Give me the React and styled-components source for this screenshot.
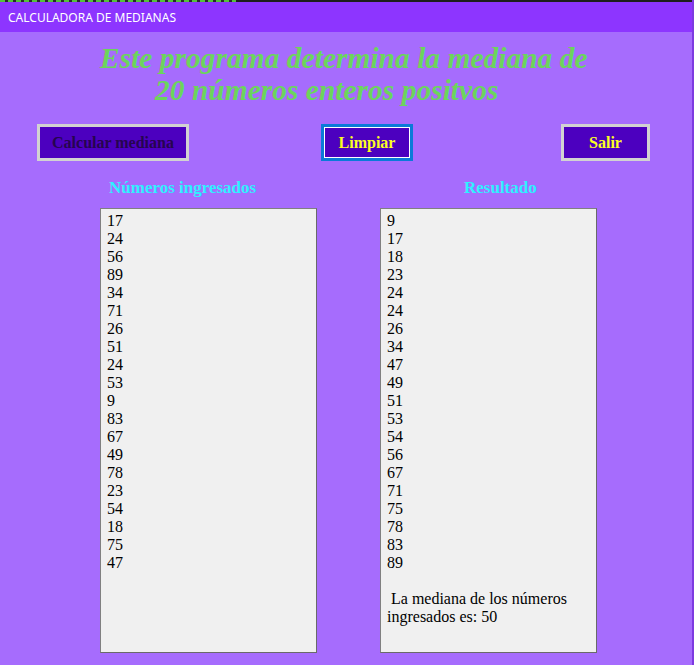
import React from "react";
import styled, { createGlobalStyle } from "styled-components";

const GlobalStyle = createGlobalStyle`
  html, body {
    margin: 0;
    padding: 0;
    background: #a66cfd;
  }
`;

const ingresados = [17, 24, 56, 89, 34, 71, 26, 51, 24, 53, 9, 83, 67, 49, 78, 23, 54, 18, 75, 47];
const ordenados = [...ingresados].sort((a, b) => a - b);

const Window = styled.div`
  width: 694px;
  height: 665px;
  display: flex;
  flex-direction: column;
  background: #a66cfd;
  border-right: 2px solid #7d3ae0;
  box-sizing: border-box;
  overflow: hidden;
`;

const TopStrip = styled.div`
  height: 2px;
  background: repeating-linear-gradient(90deg, #55c23a 0 5px, #2a2a2a 5px 8px);
  background-size: 236px 2px;
  background-repeat: no-repeat;
  background-color: #1e1e1e;
`;

const TitleBar = styled.div`
  height: 30px;
  display: flex;
  align-items: center;
  padding-left: 8px;
  background: #8d35ff;
  color: #ffffff;
  font-family: "Noto Sans", "Open Sans", sans-serif;
  font-size: 12px;
`;

const Heading = styled.h1`
  margin: 10px 0 0;
  font-family: "Liberation Serif", serif;
  font-style: italic;
  font-weight: bold;
  font-size: 29.5px;
  line-height: 32px;
  color: #6bd55c;
`;

const HeadingLine = styled.div`
  padding-left: ${({ $indent }) => $indent}px;
  white-space: nowrap;
`;

const ButtonRow = styled.div`
  display: flex;
  margin-top: 18px;
  height: 37px;
`;

const Button = styled.button`
  width: ${({ $width }) => $width}px;
  height: 37px;
  margin-left: ${({ $offset }) => $offset}px;
  box-sizing: border-box;
  background: #4c00bf;
  border: 3px solid ${({ $focused }) => ($focused ? "#0a7ad8" : "#d2d2d2")};
  box-shadow: ${({ $focused }) => ($focused ? "inset 0 0 0 1px #ffffff" : "none")};
  color: ${({ $dark }) => ($dark ? "#26054f" : "#fbff1f")};
  font-family: "Liberation Serif", serif;
  font-weight: bold;
  font-size: 16px;
  padding: 0;
  cursor: pointer;
`;

const Panels = styled.div`
  display: flex;
  margin-top: 17px;
`;

const Column = styled.div`
  display: flex;
  flex-direction: column;
  margin-left: ${({ $offset }) => $offset}px;
`;

const PanelLabel = styled.div`
  height: 20px;
  margin-left: ${({ $shift }) => $shift}px;
  font-family: "Liberation Serif", serif;
  font-weight: bold;
  font-size: 17px;
  line-height: 20px;
  color: #2ff0ff;
  white-space: nowrap;
`;

const ListBox = styled.div`
  margin-top: 10px;
  width: 217px;
  height: 445px;
  box-sizing: border-box;
  background: #f0f0f0;
  border: 1px solid #808080;
  border-right-color: #6a6a6a;
  border-bottom-color: #6a6a6a;
  padding: 3px 0 0 6px;
  font-family: "Liberation Serif", "DejaVu Serif", serif;
  font-size: 16px;
  line-height: 18px;
  color: #000000;
`;

const Line = styled.div`
  min-height: 18px;
  white-space: pre;
`;

const App = () => {
  return (
    <>
      <GlobalStyle />
      <Window>
        <TopStrip />
        <TitleBar>CALCULADORA DE MEDIANAS</TitleBar>
        <Heading>
          <HeadingLine $indent={100}>Este programa determina la mediana de</HeadingLine>
          <HeadingLine $indent={155}>20 números enteros positvos</HeadingLine>
        </Heading>
        <ButtonRow>
          <Button $width={152} $offset={37} $dark>Calcular mediana</Button>
          <Button $width={92} $offset={132} $focused>Limpiar</Button>
          <Button $width={89} $offset={148}>Salir</Button>
        </ButtonRow>
        <Panels>
          <Column $offset={100}>
            <PanelLabel $shift={9}>Números ingresados</PanelLabel>
            <ListBox>
              {ingresados.map((n, i) => (
                <Line key={i}>{n}</Line>
              ))}
            </ListBox>
          </Column>
          <Column $offset={63}>
            <PanelLabel $shift={84}>Resultado</PanelLabel>
            <ListBox>
              {ordenados.map((n, i) => (
                <Line key={i}>{n}</Line>
              ))}
              <Line />
              <Line> La mediana de los números</Line>
              <Line>ingresados es: 50</Line>
            </ListBox>
          </Column>
        </Panels>
      </Window>
    </>
  );
};

export default App;
